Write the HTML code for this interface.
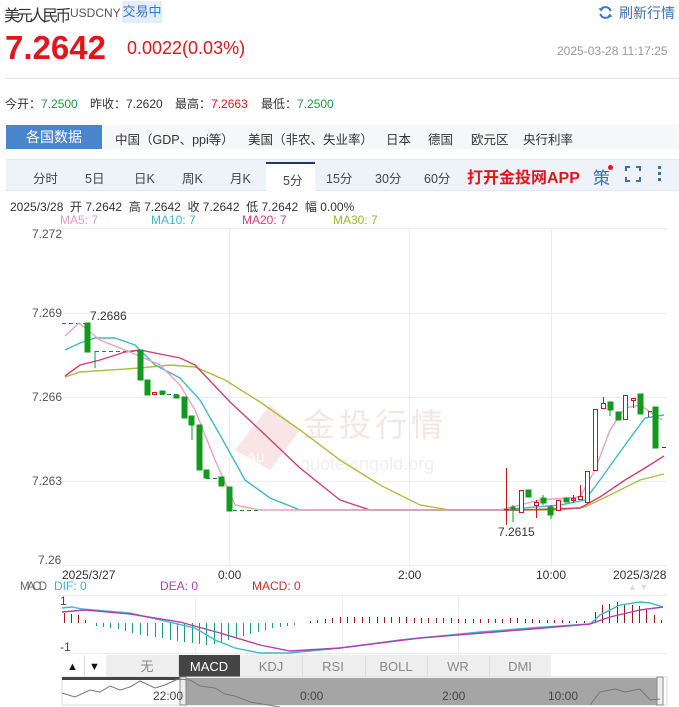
<!DOCTYPE html>
<html><head><meta charset="utf-8"><style>
*{margin:0;padding:0;box-sizing:border-box}
body{width:679px;height:707px;background:#fff;font-family:"Liberation Sans","Noto Sans CJK SC",sans-serif;position:relative;overflow:hidden;color:#333}
.a{position:absolute;white-space:nowrap}
</style></head><body>
<div class="a" style="left:4px;top:2px;font-size:16px;color:#333;letter-spacing:-3.2px">美元人民币</div>
<div class="a" style="left:70px;top:6px;font-size:12px;color:#555">USDCNY</div>
<div class="a" style="left:122px;top:1px;width:40px;height:22px;background:#e4eefa;color:#3a78c8;font-size:13px;line-height:22px;text-align:center">交易中</div>
<svg class="a" style="left:598px;top:5px" width="15" height="15" viewBox="0 0 16 16"><path d="M13.5 6.5A5.8 5.8 0 0 0 2.7 5.5M2.5 9.5a5.8 5.8 0 0 0 10.8 1" fill="none" stroke="#3a78c8" stroke-width="2.2"/><path d="M0.5 3.5L3.5 7L6 3.5Z M15.5 12.5L12.5 9L10 12.5Z" fill="#3a78c8"/></svg>
<div class="a" style="left:619px;top:3px;font-size:14px;color:#3a70b8">刷新行情</div>
<div class="a" style="left:5px;top:29px;font-size:33px;font-weight:bold;color:#e0161b">7.2642</div>
<div class="a" style="left:127px;top:38px;font-size:18px;color:#e0161b">0.0022(0.03%)</div>
<div class="a" style="left:557px;top:44px;font-size:12px;color:#999">2025-03-28 11:17:25</div>
<div class="a" style="left:5px;top:78px;width:674px;height:1px;background:#e5e5e5"></div>
<div class="a" style="left:5px;top:95px;font-size:12px;color:#333">今开：<span style="color:#1a9a3a">7.2500</span></div>
<div class="a" style="left:90px;top:95px;font-size:12px;color:#333">昨收：7.2620</div>
<div class="a" style="left:175px;top:95px;font-size:12px;color:#333">最高：<span style="color:#e0161b">7.2663</span></div>
<div class="a" style="left:261px;top:95px;font-size:12px;color:#333">最低：<span style="color:#1a9a3a">7.2500</span></div>
<div class="a" style="left:6px;top:125px;width:673px;height:24px;background:#f6f7f9"></div>
<div class="a" style="left:6px;top:125px;width:96px;height:24px;background:#4a84cc;color:#fff;font-size:14px;line-height:24px;text-align:center">各国数据</div>
<div class="a" style="left:115px;top:129px;font-size:12.5px;color:#333;word-spacing:0">中国（GDP、ppi等）</div>
<div class="a" style="left:248px;top:129px;font-size:12.5px;color:#333">美国（非农、失业率）</div>
<div class="a" style="left:386px;top:129px;font-size:12.5px;color:#333">日本</div>
<div class="a" style="left:428px;top:129px;font-size:12.5px;color:#333">德国</div>
<div class="a" style="left:471px;top:129px;font-size:12.5px;color:#333">欧元区</div>
<div class="a" style="left:523px;top:129px;font-size:12.5px;color:#333">央行利率</div>
<div class="a" style="left:6px;top:159px;width:673px;height:32px;background:#eef3fa;border-top:1px solid #e1e8f2;border-bottom:1px solid #e1e8f2"></div>
<div class="a" style="left:266px;top:162px;width:49px;height:30px;background:#fff;border-top:2px solid #1d3a6a"></div>
<div class="a" style="top:168px;left:0;font-size:12.5px;color:#444;width:0">
<span class="a" style="left:33px">分时</span><span class="a" style="left:85px">5日</span><span class="a" style="left:134px">日K</span><span class="a" style="left:182px">周K</span><span class="a" style="left:230px">月K</span><span class="a" style="left:283px;top:2px">5分</span><span class="a" style="left:326px">15分</span><span class="a" style="left:375px">30分</span><span class="a" style="left:424px">60分</span></div>
<div class="a" style="left:467px;top:164px;font-size:16px;font-weight:bold;color:#e0161b">打开金投网APP</div>
<div class="a" style="left:593px;top:164px;font-size:17px;color:#3a70b0">策</div>
<div class="a" style="left:608px;top:165px;width:5px;height:5px;border-radius:50%;background:#e0161b"></div>
<svg class="a" style="left:625px;top:166px" width="16" height="16"><path d="M1 5V1H5M11 1H15V5M15 11V15H11M5 15H1V11" fill="none" stroke="#3a70b0" stroke-width="2"/></svg>
<div class="a" style="left:658px;top:166px;width:3px;height:3px;background:#3a70b0;box-shadow:0 6px 0 #3a70b0,0 12px 0 #3a70b0"></div>
<div class="a" style="left:10px;top:198px;font-size:12px;color:#333">2025/3/28 &nbsp;开 7.2642 &nbsp;高 7.2642 &nbsp;收 7.2642 &nbsp;低 7.2642 &nbsp;幅 0.00%</div>
<div class="a" style="left:60px;top:213px;font-size:12px;color:#e89ab8">MA5: 7</div>
<div class="a" style="left:151px;top:213px;font-size:12px;color:#3ab8c8">MA10: 7</div>
<div class="a" style="left:242px;top:213px;font-size:12px;color:#d04070">MA20: 7</div>
<div class="a" style="left:333px;top:213px;font-size:12px;color:#9ab830">MA30: 7</div>

<svg class="a" style="left:0;top:0" width="679" height="707" font-family="Liberation Sans,Noto Sans CJK SC,sans-serif">
<g stroke="#ececec" stroke-width="1">
<line x1="62" y1="228.5" x2="667" y2="228.5"/><line x1="62" y1="313.5" x2="667" y2="313.5"/><line x1="62" y1="397.5" x2="667" y2="397.5"/><line x1="62" y1="481.5" x2="667" y2="481.5"/><line x1="62" y1="565.5" x2="667" y2="565.5"/>
<line x1="229.5" y1="228" x2="229.5" y2="566"/><line x1="409.5" y1="228" x2="409.5" y2="566"/><line x1="551.5" y1="228" x2="551.5" y2="566"/>
<line x1="62" y1="595.5" x2="667" y2="595.5"/><line x1="62" y1="653.5" x2="667" y2="653.5"/>
<line x1="195.5" y1="595" x2="195.5" y2="653"/><line x1="342.5" y1="595" x2="342.5" y2="653"/><line x1="458.5" y1="595" x2="458.5" y2="653"/>
</g>
<g font-size="12" fill="#555">
<text x="32" y="238">7.272</text><text x="32" y="317">7.269</text><text x="32" y="401">7.266</text><text x="32" y="485">7.263</text><text x="38" y="564">7.26</text>
</g>
<g opacity="0.13">
<path d="M235 450L270 405L300 430L270 470Z" fill="#d04040"/>
<text x="247" y="462" font-size="14" fill="#fff">Au</text>
<text x="303" y="436" font-size="32" fill="#c04040" letter-spacing="4">金投行情</text>
<text x="300" y="470" font-size="18" fill="#888">quote.cngold.org</text>
</g>
<g stroke="#1a8a2a" stroke-dasharray="4,3" stroke-width="1">
<line x1="62" y1="323.5" x2="86" y2="323.5"/><line x1="95" y1="351.5" x2="139" y2="351.5"/><line x1="160" y1="394.5" x2="178" y2="394.5"/><line x1="206" y1="478.5" x2="220" y2="478.5"/><line x1="233" y1="510.5" x2="258" y2="510.5"/>
</g>
<g fill="none" stroke-width="1.4">
<polyline stroke="#a8c040" points="65,377 80,372 140,368 170,365 195,367 225,380 260,402 300,430 340,460 380,485 420,505 450,510 560,510 585,507 610,495 640,480 664,474"/>
<polyline stroke="#d04070" points="65,376 80,365 100,360 125,352 140,350 165,355 180,358 195,365 230,402 260,430 300,468 340,500 370,510 520,510 580,508 600,497 625,480 645,468 664,456"/>
<polyline stroke="#40b8c8" points="65,350 80,343 95,338 115,338 135,345 155,365 180,378 200,400 220,435 245,480 270,498 300,510 500,510 560,505 585,500 600,480 625,445 645,418 664,415"/>
<polyline stroke="#f0a0b8" points="65,336 79,323 100,340 130,352 160,365 180,385 195,410 215,460 235,505 260,510 500,510 520,505 540,500 580,497 595,470 610,430 625,408 640,405 650,412 662,420"/>
</g>
<g fill="#129a1e" stroke="#129a1e">
<rect x="85" y="323" width="5" height="29"/><line x1="95" y1="351" x2="95" y2="368"/>
<rect x="138" y="350" width="5" height="30"/><rect x="145" y="380" width="5" height="15"/>
<rect x="160" y="391" width="5" height="3"/><rect x="174" y="395" width="5" height="3"/>
<rect x="182" y="397" width="5" height="21"/><rect x="189" y="416" width="5" height="9"/><line x1="192" y1="425" x2="192" y2="440"/>
<rect x="197" y="425" width="5" height="45"/><rect x="204" y="470" width="5" height="8"/>
<rect x="219" y="477" width="5" height="9"/><rect x="227" y="487" width="5" height="24"/>
<rect x="511" y="507" width="4" height="2"/><line x1="513" y1="505" x2="513" y2="522"/>
<rect x="526" y="490" width="5" height="7"/>
<rect x="541" y="498" width="5" height="5"/><line x1="543" y1="495" x2="543" y2="505"/>
<rect x="548" y="507" width="5" height="8"/><line x1="551" y1="505" x2="551" y2="519"/>
<rect x="564" y="498" width="5" height="4"/>
<rect x="608" y="402" width="5" height="8"/><line x1="610" y1="408" x2="610" y2="416"/>
<rect x="616" y="412" width="5" height="8"/>
<rect x="638" y="394" width="5" height="20"/>
<rect x="653" y="407" width="5" height="41"/>
</g>
<g fill="#fff" stroke="#c8161b" stroke-width="1">
<rect x="152.5" y="392.5" width="4" height="2"/>
<line x1="506.5" y1="468" x2="506.5" y2="525"/><line x1="504" y1="509.5" x2="509" y2="509.5"/>
<rect x="519.5" y="490.5" width="4" height="22"/>
<line x1="536.5" y1="500" x2="536.5" y2="518"/><rect x="534.5" y="502.5" width="4" height="3"/>
<rect x="556.5" y="500.5" width="4" height="10"/>
<rect x="571.5" y="498.5" width="4" height="2"/><line x1="573.5" y1="495" x2="573.5" y2="503"/>
<rect x="578.5" y="496.5" width="4" height="3"/><line x1="580.5" y1="485" x2="580.5" y2="496"/>
<rect x="585.5" y="471.5" width="4" height="31"/>
<rect x="593.5" y="409.5" width="4" height="61"/>
<rect x="601.5" y="403.5" width="4" height="5"/><line x1="603.5" y1="397" x2="603.5" y2="403"/>
<rect x="623.5" y="395.5" width="4" height="24"/>
<rect x="631.5" y="398.5" width="4" height="2"/><line x1="633.5" y1="400" x2="633.5" y2="408"/>
</g>
<line x1="648" y1="411.5" x2="652" y2="411.5" stroke="#555"/><line x1="648.5" y1="411" x2="648.5" y2="417" stroke="#555"/>
<line x1="662" y1="447.5" x2="666" y2="447.5" stroke="#333"/>
<text x="90" y="320" font-size="12" fill="#333">7.2686</text>
<text x="498" y="536" font-size="12" fill="#333">7.2615</text>
<g font-size="12" fill="#333">
<text x="62" y="579">2025/3/27</text><text x="218" y="579">0:00</text><text x="398" y="579">2:00</text><text x="536" y="579">10:00</text><text x="613" y="579">2025/3/28</text>
</g>
<text x="20" y="590" font-size="11.5" fill="#666" textLength="27">MACD</text>
<text x="54" y="590" font-size="12" fill="#3ab8c8">DIF: 0</text>
<text x="160" y="590" font-size="12" fill="#b040b0">DEA: 0</text>
<text x="252" y="590" font-size="12" fill="#c83030">MACD: 0</text>
<text x="628" y="590" font-size="9" fill="#ddd">▲ ▼</text>
<text x="60" y="605" font-size="12" fill="#444">1</text>
<text x="60" y="651" font-size="12" fill="#444">-1</text>
<g stroke="#1a9a7a" stroke-width="1">
<line x1="96.5" y1="623" x2="96.5" y2="626"/><line x1="103.5" y1="623" x2="103.5" y2="627"/><line x1="110.5" y1="623" x2="110.5" y2="628"/><line x1="118.5" y1="623" x2="118.5" y2="629"/><line x1="125.5" y1="623" x2="125.5" y2="631"/><line x1="132.5" y1="623" x2="132.5" y2="633"/><line x1="140.5" y1="623" x2="140.5" y2="635"/><line x1="147.5" y1="623" x2="147.5" y2="636"/><line x1="155.5" y1="623" x2="155.5" y2="637"/><line x1="162.5" y1="623" x2="162.5" y2="638"/><line x1="170.5" y1="623" x2="170.5" y2="640"/><line x1="177.5" y1="623" x2="177.5" y2="641"/><line x1="184.5" y1="623" x2="184.5" y2="642"/><line x1="192.5" y1="623" x2="192.5" y2="643"/><line x1="199.5" y1="623" x2="199.5" y2="644"/><line x1="206.5" y1="623" x2="206.5" y2="645"/><line x1="214.5" y1="623" x2="214.5" y2="644"/><line x1="221.5" y1="623" x2="221.5" y2="642"/><line x1="228.5" y1="623" x2="228.5" y2="640"/><line x1="236.5" y1="623" x2="236.5" y2="638"/><line x1="243.5" y1="623" x2="243.5" y2="636"/><line x1="250.5" y1="623" x2="250.5" y2="634"/><line x1="258.5" y1="623" x2="258.5" y2="632"/><line x1="265.5" y1="623" x2="265.5" y2="630"/><line x1="272.5" y1="623" x2="272.5" y2="628"/><line x1="280.5" y1="623" x2="280.5" y2="627"/><line x1="287.5" y1="623" x2="287.5" y2="626"/><line x1="294.5" y1="623" x2="294.5" y2="625"/>
</g>
<g stroke="#a01818" stroke-width="1">
<line x1="64.5" y1="623" x2="64.5" y2="613"/><line x1="71.5" y1="623" x2="71.5" y2="614"/><line x1="78.5" y1="623" x2="78.5" y2="615"/><line x1="85.5" y1="623" x2="85.5" y2="620"/>
<line x1="310.5" y1="623" x2="310.5" y2="621"/><line x1="317.5" y1="623" x2="317.5" y2="620"/><line x1="325.5" y1="623" x2="325.5" y2="619"/><line x1="332.5" y1="623" x2="332.5" y2="618"/><line x1="340.5" y1="623" x2="340.5" y2="617"/><line x1="347.5" y1="623" x2="347.5" y2="617"/><line x1="354.5" y1="623" x2="354.5" y2="617"/><line x1="362.5" y1="623" x2="362.5" y2="617"/><line x1="369.5" y1="623" x2="369.5" y2="617"/><line x1="377.5" y1="623" x2="377.5" y2="617"/><line x1="384.5" y1="623" x2="384.5" y2="617"/><line x1="391.5" y1="623" x2="391.5" y2="617"/><line x1="399.5" y1="623" x2="399.5" y2="617"/><line x1="406.5" y1="623" x2="406.5" y2="617"/><line x1="414.5" y1="623" x2="414.5" y2="618"/><line x1="421.5" y1="623" x2="421.5" y2="618"/><line x1="428.5" y1="623" x2="428.5" y2="618"/><line x1="436.5" y1="623" x2="436.5" y2="618"/><line x1="443.5" y1="623" x2="443.5" y2="618"/><line x1="451.5" y1="623" x2="451.5" y2="618"/><line x1="458.5" y1="623" x2="458.5" y2="619"/><line x1="465.5" y1="623" x2="465.5" y2="619"/><line x1="473.5" y1="623" x2="473.5" y2="619"/><line x1="480.5" y1="623" x2="480.5" y2="619"/><line x1="488.5" y1="623" x2="488.5" y2="619"/><line x1="495.5" y1="623" x2="495.5" y2="619"/><line x1="502.5" y1="623" x2="502.5" y2="619"/><line x1="510.5" y1="623" x2="510.5" y2="618"/><line x1="517.5" y1="623" x2="517.5" y2="618"/><line x1="525.5" y1="623" x2="525.5" y2="619"/><line x1="532.5" y1="623" x2="532.5" y2="619"/><line x1="539.5" y1="623" x2="539.5" y2="620"/><line x1="547.5" y1="623" x2="547.5" y2="620"/><line x1="554.5" y1="623" x2="554.5" y2="620"/><line x1="562.5" y1="623" x2="562.5" y2="620"/><line x1="569.5" y1="623" x2="569.5" y2="621"/><line x1="576.5" y1="623" x2="576.5" y2="621"/><line x1="584.5" y1="623" x2="584.5" y2="621"/>
<line x1="595.5" y1="623" x2="595.5" y2="612"/><line x1="602.5" y1="623" x2="602.5" y2="605"/><line x1="609.5" y1="623" x2="609.5" y2="604"/><line x1="617.5" y1="623" x2="617.5" y2="602"/><line x1="624.5" y1="623" x2="624.5" y2="604"/><line x1="632.5" y1="623" x2="632.5" y2="605"/><line x1="639.5" y1="623" x2="639.5" y2="606"/><line x1="646.5" y1="623" x2="646.5" y2="610"/><line x1="654.5" y1="623" x2="654.5" y2="615"/><line x1="661.5" y1="623" x2="661.5" y2="620"/>
</g>
<polyline fill="none" stroke="#40b8c8" stroke-width="1.4" points="62,608 72,607 82,609 130,613 160,620 195,628 215,640 235,648 260,653 290,653 340,648 400,640 480,632 530,628 590,624 600,615 620,605 640,602 650,603 663,607"/>
<polyline fill="none" stroke="#b040b0" stroke-width="1.4" points="62,612 85,610 130,614 180,622 220,633 260,645 290,651 340,648 420,638 520,630 590,624 610,617 640,610 663,607"/>
<rect x="62" y="655" width="489" height="22" fill="#eee"/>
<rect x="62" y="655" width="44" height="22" fill="#fff"/>
<line x1="84.5" y1="655" x2="84.5" y2="677" stroke="#ddd"/>
<text x="67" y="670" font-size="11" fill="#111">▲</text><text x="89" y="670" font-size="11" fill="#111">▼</text>
<rect x="178" y="655" width="62" height="22" fill="#444"/>
<g stroke="#ddd"><line x1="178.5" y1="655" x2="178.5" y2="677"/><line x1="302.5" y1="655" x2="302.5" y2="677"/><line x1="365.5" y1="655" x2="365.5" y2="677"/><line x1="427.5" y1="655" x2="427.5" y2="677"/><line x1="489.5" y1="655" x2="489.5" y2="677"/></g>
<g font-size="13" fill="#888" text-anchor="middle">
<text x="147" y="671">无</text><text x="209" y="671" fill="#fff">MACD</text><text x="271" y="671">KDJ</text><text x="333" y="671">RSI</text><text x="396" y="671">BOLL</text><text x="458" y="671">WR</text><text x="520" y="671">DMI</text>
</g>
<rect x="62" y="677" width="605" height="28" fill="#fff" stroke="#ddd"/>
<rect x="62" y="677" width="118" height="3" fill="#444"/>
<rect x="185" y="678" width="474" height="27" fill="#a5a5a5"/>
<rect x="180" y="677" width="6" height="28" fill="#eee" stroke="#888"/>
<rect x="657" y="677" width="6" height="28" fill="#eee" stroke="#888"/>
<polyline fill="none" stroke="#777" stroke-width="1" points="62,693 75,697 90,690 100,692 110,686 120,690 130,687 140,681 155,688 165,685 178,679 190,680 200,686 215,688 225,694 235,696 250,702 280,707"/>
<polyline fill="none" stroke="#777" stroke-width="1" points="590,705 600,692 615,689 625,692 640,689 650,700 660,699"/>
<g font-size="12" fill="#444"><text x="153" y="700">22:00</text><text x="300" y="700">0:00</text><text x="442" y="700">2:00</text><text x="548" y="700">10:00</text></g>
</svg>
</body></html>
